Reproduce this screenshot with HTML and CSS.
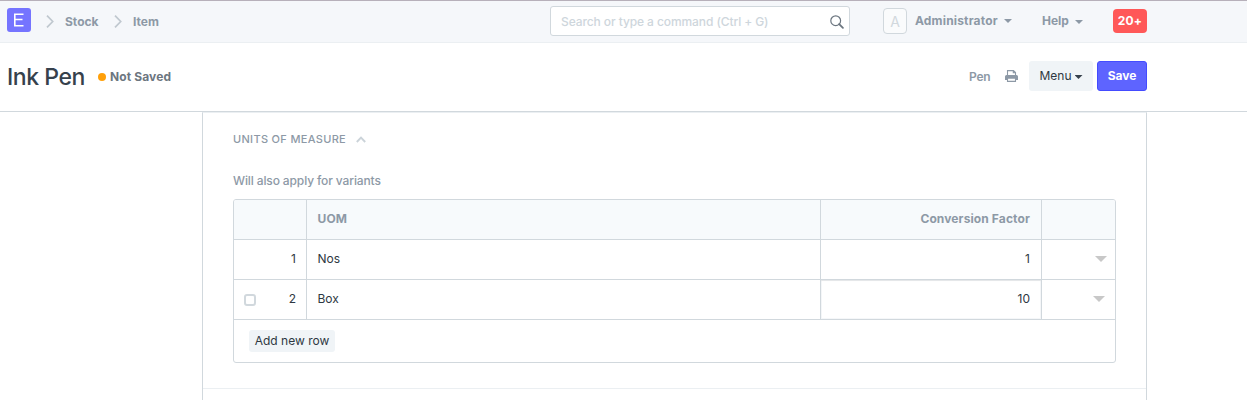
FILE: index.html
```html
<!DOCTYPE html>
<html lang="en">
<head>
<meta charset="utf-8">
<title>Ink Pen</title>
<link rel="stylesheet" href="styles.css">
</head>
<body>
<header class="navbar">
  <nav class="crumbs">
    <span class="logo"><svg width="24" height="24" viewBox="0 0 24 24"><path d="M16.500 6.300H7.800v11.400h8.700M7.800 11.500h7.700" fill="none" stroke="#fff" stroke-width="1.600"/></svg></span>
    <svg class="chevron" width="8" height="13" viewBox="0 0 8 13"><path d="M1 .7l5.700 5.800L1 12.300" fill="none" stroke="#c0c8cf" stroke-width="1.700"/></svg>
    <span class="crumb stock">Stock</span>
    <svg class="chevron" width="8" height="13" viewBox="0 0 8 13"><path d="M1 .7l5.700 5.800L1 12.300" fill="none" stroke="#c0c8cf" stroke-width="1.700"/></svg>
    <span class="crumb">Item</span>
  </nav>
  <div class="search"><span class="placeholder">Search or type a command (Ctrl + G)</span>
    <svg width="14" height="14" viewBox="0 0 14 14"><circle cx="5.700" cy="5.700" r="4.900" fill="none" stroke="#6c7680" stroke-width="1.200"/><path d="M9.200 9.200l3.700 3.700" stroke="#6c7680" stroke-width="1.800" stroke-linecap="round"/></svg>
  </div>
  <div class="account">
    <span class="avatar">A</span>
    <span class="user">Administrator</span><i class="caret"></i>
    <span class="help">Help</span><i class="caret low"></i>
    <span class="badge">20+</span>
  </div>
</header>
<section class="page-head">
  <h1 class="title">Ink Pen</h1>
  <span class="dot"></span><span class="status">Not Saved</span>
  <div class="actions">
    <span class="pen">Pen</span>
    <svg class="print" width="13" height="12" viewBox="0 0 13 12"><path d="M2.500 6V.6h6l2 2V6M8.300 .8v2h2" fill="none" stroke="#8d99a6" stroke-width="1.100"/><path d="M1.500 5h10A1.500 1.500 0 0 1 13 6.500V10h-2.500V8h-8v2H0V6.500A1.500 1.500 0 0 1 1.500 5z" fill="#8d99a6"/><path d="M2.500 8.200h8v3.200h-8z" fill="#fff" stroke="#8d99a6" stroke-width="1.100"/></svg>
    <span class="btn menu">Menu<i class="caret dark"></i></span>
    <span class="btn save">Save</span>
  </div>
</section>
<main class="form">
  <div class="section-title"><span class="section-name">UNITS OF MEASURE</span><svg width="10" height="7" viewBox="0 0 10 7"><path d="M.8 6L5 1.600 9.200 6" fill="none" stroke="#cbd3d9" stroke-width="1.900"/></svg></div>
  <p class="note">Will also apply for variants</p>
  <div class="grid">
    <div class="row head"><div class="cell"></div><div class="cell name">UOM</div><div class="cell num">Conversion Factor</div><div class="cell"></div></div>
    <div class="row"><div class="cell num">1</div><div class="cell name">Nos</div><div class="cell num">1</div><div class="cell open"><i class="tri"></i></div></div>
    <div class="row"><div class="cell num"><i class="check"></i>2</div><div class="cell name">Box</div><div class="cell num editing">10</div><div class="cell open edit"><i class="tri"></i></div></div>
    <div class="foot"><span class="add">Add new row</span></div>
  </div>
</main>
</body>
</html>
```
FILE: styles.css
```css
* { box-sizing: border-box; }
body { margin: 0; height: 400px; overflow: hidden; background: #fff; color: #2e3842; font: 400 12px/18px Inter, "Liberation Sans", sans-serif; }
svg { display: block; flex: none; }
span { white-space: nowrap; }
.navbar { display: grid; grid-template-columns: 543px 300px 1fr; height: 43px; padding: 0 100px 0 7px; background: #f5f7fa; border-top: 1px solid #b7b0ba; border-bottom: 1px solid #ebeff2; color: #8d99a6; font-weight: 700; }
.crumbs { display: flex; align-items: center; height: 38px; }
.logo { width: 24px; height: 24px; border-radius: 3px; background: #7574ff; }
.chevron { margin-left: 15px; margin-top: 2px; margin-right: 11px; }
.crumb { margin-top: 3px; }
.stock { width: 34px; }
.search { display: flex; justify-content: space-between; align-items: center; height: 30px; margin-top: 5px; padding: 1px 5px 0 10px; border: 1px solid #d1d8dd; border-radius: 3px; background: #fff; color: #ced6dc; font-weight: 500; letter-spacing: -.09px; }
.account { display: flex; align-items: center; height: 40px; padding-left: 33px; }
.avatar { width: 24px; height: 26px; margin-right: 8px; border: 1px solid #d1d8dd; border-radius: 4px; background: #fafbfc; color: #d1d8dd; font-size: 14px; font-weight: 400; line-height: 25px; text-align: center; }
.user { width: 83px; letter-spacing: .17px; }
.caret { width: 8px; height: 4px; margin-left: 6px; background: #8d99a6; clip-path: polygon(0 0, 100% 0, 50% 100%); }
.low { margin-top: 2px; margin-left: 5px; }
.help { width: 28px; margin-left: 30px; }
.badge { width: 34px; height: 24px; margin-left: auto; border-radius: 4px; background: #ff5858; color: #fff; font-weight: 700; line-height: 24px; letter-spacing: .2px; text-align: center; }
.page-head { display: flex; align-items: center; height: 69px; padding: 0 100px 0 7px; border-bottom: 1px solid #d1d8dd; }
.title { width: 78px; margin: 0; color: #36414c; font-size: 23px; font-weight: 500; line-height: 30px; letter-spacing: -.45px; white-space: nowrap; }
.dot { width: 8px; height: 8px; margin-left: 13px; border-radius: 50%; background: #ffa00a; }
.status { margin-left: 4px; color: #6c7680; font-weight: 700; letter-spacing: .12px; }
.actions { display: flex; align-items: center; height: 30px; margin: 0 0 2px auto; }
.pen { width: 22px; margin-top: 2px; color: #8d99a6; font-weight: 600; letter-spacing: -.2px; }
.print { margin: 0 11px 0 14px; }
.btn { display: flex; align-items: center; justify-content: center; height: 30px; border-radius: 3px; }
.menu { width: 64px; margin-right: 4px; background: #f0f4f7; }
.dark { margin-left: 3px; margin-top: 2px; background: #36414c; }
.save { width: 50px; border: 1px solid #444bff; background: #5e64ff; color: #fff; font-weight: 700; }
.form { width: 945px; height: 288px; margin-left: 202px; padding: 18px 30px 0; border: 1px solid #d1d8dd; border-top-color: #ebeff2; border-bottom: 0; }
.form::after { content: ""; display: block; height: 1px; margin: 25px -30px 0; background: #ebeff2; }
.section-title { display: flex; align-items: center; height: 16px; color: #8d99a6; font-size: 11px; font-weight: 500; letter-spacing: .32px; }
.section-name { width: 123px; }
.note { margin: 25px 0 9px; color: #8d99a6; font-weight: 500; letter-spacing: -.12px; }
.grid { width: 883px; height: 164px; border: 1px solid #d1d8dd; border-radius: 3px; overflow: hidden; }
.row { display: grid; grid-template-columns: 73px 514px 221px 73px; height: 40px; border-bottom: 1px solid #d1d8dd; }
.head { background: #f7fafc; color: #8d99a6; font-weight: 700; letter-spacing: .12px; }
.cell { display: flex; align-items: center; padding: 0 11px 1px 10px; border-right: 1px solid #d1d8dd; }
.cell:last-child { border-right: 0; }
.name { padding-left: 10.5px; }
.num { justify-content: flex-end; }
.row > .num:first-child { padding-right: 10px; }
.editing { box-shadow: inset 0 1px 1px rgba(0, 0, 0, .07), inset 0 0 0 1px #f5f7f9; }
.check { width: 12px; height: 12px; margin: 2px auto 0 0; border: 2px solid #d1d8dd; border-radius: 3px; }
.tri { width: 12px; height: 6px; background: #c8c8c8; clip-path: polygon(0 0, 100% 0, 50% 100%); }
.open { justify-content: flex-end; padding-right: 8px; }
.edit { padding-right: 10px; }
.foot { padding: 10px 15px; }
.add { display: block; width: 86px; height: 22px; border-radius: 3px; background: #f0f4f7; line-height: 22px; text-align: center; }
```
